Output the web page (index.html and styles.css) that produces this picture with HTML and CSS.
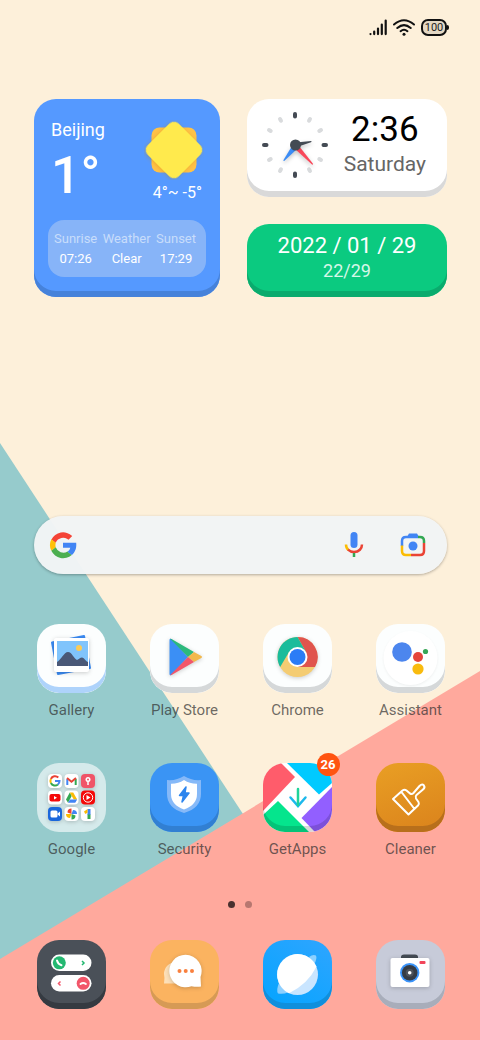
FILE: index.html
```html
<!DOCTYPE html>
<html lang="en">
<head>
<meta charset="utf-8">
<meta name="viewport" content="width=device-width, initial-scale=1">
<title>Home screen</title>
<link rel="stylesheet" href="styles.css">
</head>
<body>
<svg class="wallpaper" viewBox="0 0 480 1040" preserveAspectRatio="none" aria-hidden="true">
  <path fill="#96cbcc" d="M0 443L243 814 0 960z"/>
  <path fill="#ffa99d" d="M480 671L0 959v81h480z"/>
</svg>

<header class="status">
  <svg width="18" height="17" viewBox="0 0 18 17" stroke="#111" stroke-width="2.200" stroke-linecap="round" role="img" aria-label="Signal"><path d="M1.500 15v.1M5.200 12.500v2.600M9 9.500v5.600M12.800 5.500v9.600M16.700 1.500v13.600"/></svg>
  <svg width="22" height="17" viewBox="0 0 22 17" fill="none" stroke="#111" stroke-width="2" stroke-linecap="round" role="img" aria-label="Wi-Fi"><path d="M1 5.500Q11-3 21 5.500M4.300 9Q11 3.200 17.700 9M7.600 12.200Q11 9.300 14.400 12.200"/><circle cx="11" cy="15.300" r="1.500" fill="#111" stroke="none"/></svg>
  <span class="battery">100</span>
</header>

<main>
  <section class="widgets">
    <article class="card weather">
      <div class="weather-now">
        <div>
          <h2>Beijing</h2>
          <p class="degrees">1°</p>
        </div>
        <div class="forecast">
          <svg width="60" height="60" viewBox="0 0 60 60" role="img" aria-label="Sunny">
            <rect x="7.500" y="7.500" width="45" height="45" rx="8" fill="#ffc247"/>
            <rect class="sun" x="8" y="8" width="44" height="44" rx="7" fill="#ffea4d" transform="rotate(45 30 30)"/>
          </svg>
          <p>4°~ -5°</p>
        </div>
      </div>
      <dl class="details">
        <div><dt>Sunrise</dt><dd>07:26</dd></div>
        <div><dt>Weather</dt><dd>Clear</dd></div>
        <div><dt>Sunset</dt><dd>17:29</dd></div>
      </dl>
    </article>
    <div class="side">
      <article class="card clock">
        <svg width="70" height="70" viewBox="0 0 70 70" stroke-linecap="round" aria-hidden="true">
          <g stroke="#444b54" stroke-width="4"><path d="M35 4v2.500M35 63.500V66M4 35h2.500M63.500 35H66"/></g>
          <g stroke="#d9dbdd" stroke-width="4"><path d="M50 9l-1 1.700M61 20l-1.700 1M61 50l-1.700-1M50 61l-1-1.700M20 61l1-1.700M9 50l1.700-1M9 20l1.700 1M20 9l1 1.700"/></g>
          <path class="hand" fill="#3b8cf5" d="M32 36L23.500 50q-.3 1.500 1 .8L37 39z"/>
          <path class="hand" fill="#f9485a" d="M35 39L52 54.500q1.500.5.800-1L39 36z"/>
          <path class="hand" fill="#444b54" d="M36 32.500l15-1.500q1.200.6 0 1.200L37 37z"/>
          <circle cx="35.500" cy="35" r="5.500" fill="#444b54"/>
        </svg>
        <div class="clock-text"><time>2:36</time><p>Saturday</p></div>
      </article>
      <article class="card date"><time>2022 / 01 / 29</time><p>22/29</p></article>
    </div>
  </section>

  <form class="search">
    <svg width="28" height="28" viewBox="0 0 48 48" role="img" aria-label="Google"><path fill="#f44336" d="M4 15A22.500 22.500 0 0 1 39.800 8.500L33.500 15A13.800 13.800 0 0 0 11.500 20z"/><path fill="#ffc107" d="M4 14A22.500 22.500 0 0 0 4 34l7.600-6a14 14 0 0 1 0-8z"/><path fill="#4caf50" d="M4 34A22.500 22.500 0 0 0 39 41l-7.200-6A13.800 13.800 0 0 1 11.500 28z"/><path fill="#4285f4" d="M24 20h22.600C47.500 28 45.500 36 39 41.300L31.800 35.500A10 10 0 0 0 36.500 28.600H24z"/></svg>
    <input type="search" aria-label="Search">
    <button type="button" aria-label="Voice search"><svg width="20" height="28" viewBox="0 0 20 28" fill="none" stroke-width="2.500"><rect x="6.500" y="1" width="7" height="16" rx="3.500" fill="#4285f4"/><path stroke="#fbbc04" d="M2 13.500q0 3.500 2.500 5.500"/><path stroke="#ea4335" d="M4 18.600q2.500 2.400 6 2.400c5 0 8-3.500 8-7.500"/><path stroke="#34a853" d="M10 22v4"/></svg></button>
    <button type="button" aria-label="Search by image"><svg width="26" height="26" viewBox="0 0 26 26" fill="none" stroke-width="2.500"><path fill="#4285f4" d="M7 5l2-3.500h8L19 5z"/><path stroke="#4285f4" d="M2 14V9q0-4 4-4h12"/><path stroke="#34a853" d="M18 5h2q4 0 4 4v2"/><path stroke="#ea4335" d="M24 11v8q0 4-4 4h-9"/><path stroke="#fbbc04" d="M2 13.500V19q0 4 4 4h5"/><circle cx="13" cy="14" r="4.500" fill="#4285f4"/></svg></button>
  </form>

  <nav class="apps" aria-label="Apps">
    <a class="app" href="#gallery"><span class="tile gallery">
      <svg viewBox="0 0 69 69"><path fill="#3b8cf5" stroke="#3b8cf5" stroke-width="2" stroke-linejoin="round" d="M15 18.500L47 12l6 32-32 6z"/><rect class="lift" x="17" y="14" width="35" height="34" rx="2" fill="#fff"/><path fill="#80c4fc" d="M20 17h31v25H20z"/><circle cx="42" cy="24" r="3" fill="#fbcb55"/><path fill="#4a5877" d="M20 42v-4c4-2 7-10 11-10 4 0 6 7 9 8 2-1 3-2.500 5-2.500s3 3 6 4.500v4z"/></svg></span>Gallery</a>
    <a class="app" href="#play"><span class="tile white">
      <svg viewBox="0 0 69 69"><g class="lift"><path fill="#3b8ff5" d="M19.500 16q0-2 2-1L38 33 21.500 51q-2 1-2-1z"/><path fill="#2cb97c" d="M20 14.800q1-.3 2 .4L44 28l-6 5z"/><path fill="#f2b84b" d="M44 27.900l7.300 4.100q1.400 1 0 2L44 38.100 38 33z"/><path fill="#f2566a" d="M20 51.200q1 .2 2-.4L44 38l-6-5z"/></g></svg></span>Play Store</a>
    <a class="app" href="#chrome"><span class="tile white">
      <svg viewBox="0 0 69 69"><circle class="lift" cx="34.500" cy="33" r="20" fill="#f4cc72"/><path fill="#e0544d" d="M34.500 13A20 20 0 0 1 52 43H34.500V33l8.500-5z"/><path fill="#1bbc9b" d="M17.200 43A20 20 0 0 1 34.500 13L43 28l-8.500 5-8.500-5z"/><circle cx="34.500" cy="33" r="10" fill="#fff"/><circle cx="34.500" cy="33" r="8" fill="#2b7cf6"/></svg></span>Chrome</a>
    <a class="app" href="#assistant"><span class="tile white">
      <svg viewBox="0 0 69 69"><circle class="halo" cx="34.500" cy="34" r="27" fill="#fff"/><circle cx="26" cy="28" r="9.800" fill="#4c86ee"/><circle cx="42" cy="33" r="5" fill="#e5453b"/><circle cx="42" cy="45" r="5.600" fill="#f9bb0e"/><circle cx="49.500" cy="27.500" r="2.600" fill="#37a656"/></svg></span>Assistant</a>
    <a class="app" href="#google"><span class="tile folder">
      <svg viewBox="0 0 69 69">
        <g class="lift" fill="#fff"><rect x="11" y="11" width="14" height="14" rx="4"/><rect x="27.500" y="11" width="14" height="14" rx="4"/><rect x="44" y="11" width="14" height="14" rx="4" fill="#f05468"/><rect x="11" y="27.500" width="14" height="14" rx="4"/><rect x="27.500" y="27.500" width="14" height="14" rx="4"/><rect x="44" y="27.500" width="14" height="14" rx="4" fill="#f50909"/><rect x="11" y="44" width="14" height="14" rx="4" fill="#1a67dc"/><rect x="27.500" y="44" width="14" height="14" rx="4"/><rect x="44" y="44" width="14" height="14" rx="4"/></g>
        <g fill="none" stroke-width="2"><path stroke="#ea4335" d="M13.900 16a4.600 4.600 0 0 1 7.400-1.500"/><path stroke="#fbbc04" d="M13.900 16a4.500 4.500 0 0 0 0 4"/><path stroke="#34a853" d="M13.900 20a4.500 4.500 0 0 0 7 1.500"/><path stroke="#4285f4" d="M20.900 21.500q1.600-1.300 1.600-3.500H18"/>
        <path stroke="#4285f4" d="M30.300 22v-6"/><path stroke="#34a853" d="M38.700 22v-6"/><path stroke="#ea4335" d="M30 15l4.500 3.800L39 15"/></g>
        <circle cx="51" cy="16.500" r="2.500" fill="#fff"/><path stroke="#fff" stroke-width="1.500" d="M51 18v4"/><circle cx="51" cy="16.500" r="1" fill="#f05468"/>
        <rect x="12.500" y="31" width="11" height="7.500" rx="2" fill="#f50909"/><path fill="#fff" d="M17 33l3 1.800-3 1.700z"/>
        <path fill="#34a853" d="M32.800 29.500L29 36.500l2 3.300 3.700-6.800z"/><path fill="#fbbc04" d="M32.800 29.500h3.400l4 7h-3.500z"/><path fill="#4285f4" d="M33 36.500h7.200l-2 3.300H31z"/>
        <circle cx="51" cy="34.500" r="4.700" fill="none" stroke="#fff"/><path fill="#fff" d="M49.500 32l4 2.500-4 2.500z"/>
        <rect x="13.500" y="47.500" width="7" height="7" rx="1.500" fill="#fff"/><path fill="#fff" d="M20 51l3-2.500v5z"/>
        <path fill="#ea4335" d="M34.500 51v-5.500q-4 0-4 4z"/><path fill="#4285f4" d="M34.500 51H40q0-4-4-4z"/><path fill="#34a853" d="M34.500 51v5.500q4 0 4-4z"/><path fill="#fbbc04" d="M34.500 51H29q0 4 4 4z"/>
        <path fill="#4285f4" d="M50.500 46h3v6h-3z"/><path fill="#fbbc04" d="M50.500 46L47 48.500l1.300 2.500 2.200-1.200z"/><path fill="#34a853" d="M50.500 51.500h3V56h-3z"/>
      </svg></span>Google</a>
    <a class="app" href="#security"><span class="tile security">
      <svg viewBox="0 0 69 69"><path fill="#86b9f8" d="M34 13q8 5 17 4v14q0 14-17 19Q17 45 17 31V17q9 1 17-4z"/><path fill="#fff" d="M34 17q6 4 13 3.800V31q0 11-13 15.500Q21 42 21 31V20.800Q28 21 34 17z"/><path fill="#2d85ee" stroke="#2d85ee" stroke-width="1.500" stroke-linejoin="round" d="M36 24L29.500 32.500h4L32 39l7-9h-4z"/></svg></span>Security</a>
    <a class="app" href="#getapps"><span class="tile getapps">
      <svg viewBox="0 0 69 69"><path fill="#fff" d="M0 0h69v69H0z"/><path fill="#ff5c6b" d="M0 0h18l14 14L0 48z"/><path fill="#00caff" d="M24 0h45v20L56 31.500z"/><path fill="#925fff" d="M69 24L38.500 55 52 69h17z"/><path fill="#05e58d" d="M0 52l15-14 31 31H0z"/><path fill="none" stroke="#1cb9ec" stroke-width="2.500" stroke-linecap="round" d="M27.500 34.500L35 43l7.500-8.500"/><path stroke="#1fd39a" stroke-width="2.500" stroke-linecap="round" d="M35 26v16"/></svg></span><span class="badge">26</span>GetApps</a>
    <a class="app" href="#cleaner"><span class="tile cleaner">
      <svg viewBox="0 0 69 69"><path fill="none" stroke="#fff" stroke-width="2" stroke-linejoin="round" stroke-linecap="round" d="M17 36l9.500-8.500q2-1.500 4 0l3.500 3q2 1 3.500-.5l6-7q2.500-2.500 4.300-.7 1.700 2-.8 4.200l-6.500 5.500q-1.500 1.500-.5 3.500l2.500 3.500q1 2-.5 3.500L32.500 51.500zM25.500 29L38.500 46"/></svg></span>Cleaner</a>
  </nav>
</main>

<footer>
  <div class="pager" aria-hidden="true"><i></i><i></i></div>
  <nav class="apps" aria-label="Dock">
    <a class="app" href="#phone" aria-label="Phone"><span class="tile phone">
      <svg viewBox="0 0 69 69"><rect x="14" y="14.500" width="40.500" height="16.500" rx="8.250" fill="#fff"/><rect x="14" y="35" width="40.500" height="16.500" rx="8.250" fill="#fff"/><circle cx="22.300" cy="22.800" r="6.500" fill="#24b871"/><circle cx="46.200" cy="43.300" r="6.500" fill="#f2566a"/><path fill="none" stroke="#fff" stroke-width="2" stroke-linecap="round" d="M20 20.500q.8 3.500 4.500 4.700M43.500 44q2.700-2 5.400 0"/><path fill="none" stroke="#24b871" stroke-width="1.500" d="M45 21l2 2-2 2"/><path fill="none" stroke="#f2566a" stroke-width="1.500" d="M23.500 41.500l-2 2 2 2"/></svg></span></a>
    <a class="app" href="#messages" aria-label="Messages"><span class="tile messages">
      <svg viewBox="0 0 69 69"><path fill="#fde0b8" d="M26 22a12 12 0 0 0-12 12q1 4 0 9.500h13z"/><path class="lift" fill="#fff" d="M35.500 14.700a16.300 16.300 0 1 0 6 31.500q5 1 9.500.3l-.5-9.500a16.300 16.300 0 0 0-15-22.300z"/><g fill="#f9803e"><circle cx="29.500" cy="31" r="2"/><circle cx="35.700" cy="31" r="2"/><circle cx="42" cy="31" r="2"/></g></svg></span></a>
    <a class="app" href="#browser" aria-label="Browser"><span class="tile browser">
      <svg viewBox="0 0 69 69"><path fill="#8dd0ff" d="M46 17q4-3 7-1.500 1.500 3-2 9zM16 43q-3 7-1 10.500 5 1 10-1z"/><circle cx="34.500" cy="34.500" r="20.500" fill="#c9e5ff"/><path fill="#fff" d="M53.500 26.500A20.500 20.500 0 1 0 26 53.200Q45 44 53.500 26.500z"/></svg></span></a>
    <a class="app" href="#camera" aria-label="Camera"><span class="tile camera">
      <svg viewBox="0 0 69 69"><path fill="#444b54" d="M25 19v-2q0-2.500 3-2.500h11q3 0 3 2.500v2z"/><rect class="lift" x="14.500" y="18" width="39" height="29" rx="2" fill="#fff"/><circle cx="33.700" cy="32.700" r="9.700" fill="#3b94fa"/><circle cx="33.700" cy="32.700" r="7.800" fill="#353b44"/><circle cx="33.700" cy="32.700" r="4" fill="#4c525b"/><circle cx="33.700" cy="32.700" r="1.800" fill="#fff"/><rect x="43.500" y="21" width="6" height="3" rx="1" fill="#f2455a"/></svg></span></a>
  </nav>
</footer>
</body>
</html>
```
FILE: styles.css
```css
* { box-sizing: border-box; margin: 0; }

body {
  position: relative;
  display: flex;
  flex-direction: column;
  min-height: 100vh;
  background: #fdf0da;
  font-family: Roboto, "Noto Sans", sans-serif;
  color: #fff;
}

svg { display: block; flex: none; }

.wallpaper {
  position: absolute;
  inset: 0;
  width: 100%;
  height: 100%;
  z-index: -1;
}

.status {
  display: flex;
  justify-content: flex-end;
  align-items: center;
  gap: 6px;
  padding: 19px 33px 0 0;
}

.battery {
  position: relative;
  width: 26px;
  height: 17px;
  border: 2px solid #111;
  border-radius: 7px;
  background: #e4d8c4;
  color: #222;
  font-size: 11px;
  line-height: 13px;
  display: flex;
  justify-content: center;
}

.battery::after {
  content: "";
  position: absolute;
  right: -4px;
  top: 4px;
  width: 2px;
  height: 5px;
  border-radius: 0 2px 2px 0;
  background: #111;
}

.widgets {
  display: grid;
  grid-template-columns: 186fr 200fr;
  gap: 27px;
  padding: 63px 33px 0 34px;
}

.card { border-radius: 22px; }

.weather {
  padding: 19px 14px 20px;
  background: #5599ff;
  box-shadow: inset 0 -6px #4682da;
}

.weather-now {
  display: flex;
  justify-content: space-between;
  padding: 0 4px 0 3px;
}

.weather h2 {
  font-size: 18px;
  font-weight: 400;
  line-height: 24px;
}

.degrees {
  padding-top: 3px;
  font-size: 52px;
  font-weight: 500;
  line-height: 62px;
}

.forecast {
  padding-top: 2px;
  font-size: 16px;
  line-height: 24px;
}

.forecast svg { margin: 0 -2px 1px 0; }
.forecast p { text-align: right; }
.sun { filter: drop-shadow(0 1px 2px rgba(200, 130, 0, 0.35)); }

.details {
  display: flex;
  justify-content: space-between;
  margin-top: 13px;
  padding: 9px 10px 8px 6px;
  border-radius: 16px;
  background: #87b4f8;
  font-size: 13px;
  line-height: 20px;
  text-align: center;
}

.details dt { color: #c8ddfb; }
.details dd { margin: 0; }

.side {
  display: flex;
  flex-direction: column;
  gap: 27px;
}

.clock {
  display: flex;
  align-items: center;
  justify-content: space-between;
  height: 98px;
  padding: 0 21px 7px 13px;
  background: #fff;
  box-shadow: inset 0 -6px #d9d9d9;
}

.clock svg { overflow: visible; }
.hand { filter: drop-shadow(0 2px 2px rgba(0, 0, 0, 0.25)); }
.clock-text { text-align: center; }

.clock time {
  display: block;
  color: #000;
  font-size: 35px;
  line-height: 38px;
}

.clock p {
  color: #666;
  font-size: 21px;
  line-height: 30px;
}

.date {
  padding: 9px 0 14px;
  background: #0bca80;
  box-shadow: inset 0 -6px #0aab6d;
  text-align: center;
}

.date time {
  display: block;
  font-size: 22px;
  line-height: 26px;
}

.date p {
  color: #d5f7e8;
  font-size: 18px;
  line-height: 24px;
}

.search {
  display: flex;
  align-items: center;
  height: 58px;
  margin: 219px 33px 50px 34px;
  padding: 0 21px 0 15px;
  border-radius: 29px;
  background: rgba(242, 244, 245, 0.97);
  box-shadow: 0 1px 3px rgba(0, 0, 0, 0.3);
}

.search input {
  flex: 1;
  min-width: 0;
  border: 0;
  outline: 0;
  background: none;
  font: 16px Roboto, sans-serif;
}

.search button {
  padding: 0;
  border: 0;
  background: none;
}

.search button + button { margin-left: 36px; }

.apps {
  display: grid;
  grid-template-columns: repeat(4, 1fr);
  row-gap: 43px;
  padding: 0 13px 0 15px;
}

.app {
  position: relative;
  display: flex;
  flex-direction: column;
  align-items: center;
  gap: 7px;
  color: rgba(45, 45, 45, 0.7);
  font-size: 15px;
  line-height: 20px;
  text-decoration: none;
}

.tile {
  position: relative;
  width: 69px;
  height: 69px;
  border-radius: 22px;
  overflow: hidden;
}

.tile::after {
  content: "";
  position: absolute;
  inset: 0;
  border-radius: 22px;
  box-shadow: inset 0 -6px var(--edge, transparent);
}

.lift { filter: drop-shadow(0 1px 2px rgba(0, 0, 0, 0.2)); }
.halo { filter: drop-shadow(0 1px 1px rgba(0, 0, 0, 0.06)); }

.white { background: #fcfefe; --edge: #d5d8d9; }
.gallery { background: #fcfefe; --edge: #aed3fb; }
.folder { background: rgba(255, 255, 255, 0.6); }
.security { background: #3a94f4; --edge: #317fd2; }
.getapps { --edge: rgba(0, 0, 0, 0.15); }
.cleaner { background: linear-gradient(160deg, #e99f24, #da821c); --edge: #b86f1b; }
.phone { background: #4a5058; --edge: #353a41; }
.messages { background: #fbb360; --edge: #d69a55; }
.browser { background: linear-gradient(215deg, #2fa5ff, #03a4ff); --edge: #108fdc; }
.camera { background: #c7cbd9; --edge: #a8adba; }

.badge {
  position: absolute;
  top: -10px;
  left: calc(50% + 19px);
  width: 23px;
  height: 23px;
  border-radius: 50%;
  background: #ff5411;
  color: #fff;
  font-size: 13px;
  font-weight: 700;
  line-height: 23px;
  text-align: center;
}

.pager {
  display: flex;
  justify-content: center;
  gap: 10px;
  padding: 42px 0 32px;
}

.pager i {
  width: 7px;
  height: 7px;
  border-radius: 50%;
  background: #4a302f;
}

.pager i + i { background: #b77770; }
footer { padding-bottom: 30px; }
```
